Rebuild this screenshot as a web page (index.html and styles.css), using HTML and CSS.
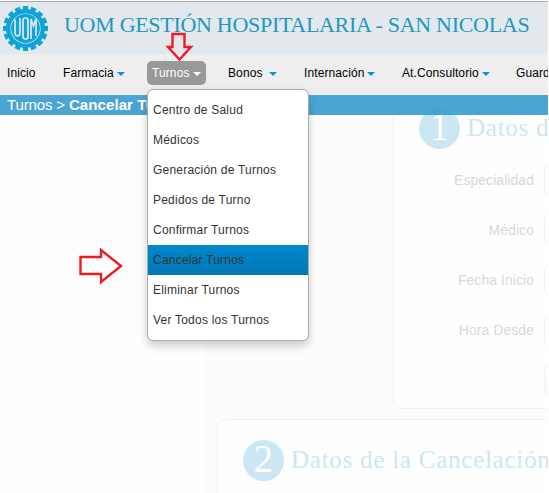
FILE: index.html
```html
<!DOCTYPE html>
<html lang="es">
<head>
<meta charset="utf-8">
<title>UOM Gestión Hospitalaria</title>
<link rel="stylesheet" href="styles.css">
</head>
<body>
<div class="app">
  <header class="header">
    <svg class="logo" width="48" height="46" viewBox="0 0 48 46">
      <circle class="teeth" cx="24.500" cy="22.500" r="20" pathLength="160"/>
      <circle class="rim" cx="24.500" cy="22.500" r="17.300"/>
      <circle class="disc" cx="24.500" cy="22.500" r="14.400"/>
      <g class="mono">
        <path d="M14 13.500V26Q14 30 16.500 30Q19 30 19 26V12"/>
        <rect x="22" y="12" width="5" height="21" rx="2.200"/>
        <path d="M30 33V13L32.500 20L35 13V30"/>
      </g>
    </svg>
    <h1 class="title">UOM GESTIÓN HOSPITALARIA - SAN NICOLAS</h1>
  </header>
  <nav class="nav">
    <a class="item">Inicio</a>
    <a class="item">Farmacia<i class="caret"></i></a>
    <div class="item">
      <a class="pill">Turnos<i class="caret"></i></a>
      <ul class="menu">
        <li>Centro de Salud</li>
        <li>Médicos</li>
        <li>Generación de Turnos</li>
        <li>Pedidos de Turno</li>
        <li>Confirmar Turnos</li>
        <li class="active">Cancelar Turnos</li>
        <li>Eliminar Turnos</li>
        <li>Ver Todos los Turnos</li>
      </ul>
    </div>
    <a class="item">Bonos<i class="caret wide"></i></a>
    <a class="item">Internación<i class="caret"></i></a>
    <a class="item">At.Consultorio<i class="caret"></i></a>
    <a class="item">Guardia</a>
  </nav>
  <div class="crumb">Turnos &gt; <b>Cancelar Turnos</b></div>
  <div class="page">
    <aside class="side"></aside>
    <main class="content">
      <section class="panel first">
        <h2 class="head"><span class="num">1</span><span>Datos del Turno</span></h2>
        <div class="row"><label>Especialidad</label><span class="field"></span></div>
        <div class="row"><label>Médico</label><span class="field"></span></div>
        <div class="row"><label>Fecha Inicio</label><span class="field"></span></div>
        <div class="row"><label>Hora Desde</label><span class="field"></span></div>
        <div class="row"><label></label><span class="field button"></span></div>
      </section>
      <section class="panel second">
        <h2 class="head"><span class="num">2</span><span>Datos de la Cancelación</span></h2>
      </section>
    </main>
  </div>
  <svg class="arrow down" width="32" height="32" viewBox="0 0 32 32"><path d="M9.500 3H21.500V16H28L16.500 28.500L5 16H9.500Z"/></svg>
  <svg class="arrow right" width="48" height="38" viewBox="0 0 48 38"><path d="M4.500 10H25V3L45 19L25 35V27H4.500Z"/></svg>
</div>
</body>
</html>
```

FILE: styles.css
```css
* { box-sizing: border-box; }
body { margin: 0; background: #fff; font-family: "Liberation Sans", Arial, sans-serif; overflow: hidden; }
.app { position: relative; width: 548px; height: 493px; overflow: hidden; }
.header { display: flex; align-items: flex-start; height: 54px; padding-left: 1px; background: #e2e8ec; border-top: 1px solid #fff; box-shadow: inset 0 1px #a9adad; }
.logo { margin-top: 5px; flex: none; }
.teeth { fill: none; stroke: #0ea5d6; stroke-width: 5; stroke-dasharray: 6.5 3.5; stroke-dashoffset: 3.25; }
.rim { fill: none; stroke: #0ea5d6; stroke-width: 4.4; }
.disc { fill: #0ea5d6; }
.mono { fill: none; stroke: #e2e8ec; stroke-width: 1.7; }
.title { margin: 10px 0 0 15px; font: 400 22px/28px "Liberation Serif", serif; letter-spacing: -.3px; color: #2098c4; white-space: nowrap; }
.nav { position: relative; z-index: 3; display: grid; grid-template-columns: 56px 84px 81px 76px 98px 114px 80px; height: 41px; padding-left: 7px; background: #eee; font-size: 12px; line-height: 24px; color: #000; white-space: nowrap; }
.item { position: relative; padding-top: 7px; letter-spacing: .1px; }
.caret { display: inline-block; margin-left: 3px; border: 4px solid transparent; border-top-color: #0a8fd4; border-bottom: 0; vertical-align: 1px; }
.caret.wide { margin-left: 6px; }
.pill { display: block; width: 59px; height: 24px; padding-left: 5px; border-radius: 5px; background: #999; color: #fff; }
.pill .caret { border-top-color: #fff; }
.menu { position: absolute; top: 35px; left: 0; width: 162px; height: 252px; margin: 0; padding: 5px 0; list-style: none; background: #fff; border: 1px solid #aaa; border-radius: 6px; box-shadow: 0 5px 10px rgba(0,0,0,.2); color: #333; letter-spacing: .22px; }
.menu li { height: 30px; padding-left: 5px; line-height: 30px; }
.menu .active { background: linear-gradient(#08c, #0077b3); }
.crumb { position: relative; z-index: 2; height: 20px; padding-left: 7px; background: rgba(50,152,206,.88); color: #fff; font-size: 15px; line-height: 20px; letter-spacing: -.15px; }
.crumb b { letter-spacing: .1px; }
.page { display: flex; height: 398px; margin-top: -20px; background: #fcfcfc; }
.side { width: 205px; flex: none; background: #fefefe; }
.content { width: 343px; padding-left: 12px; overflow: hidden; }
.panel { width: 500px; border: 1px solid #f2f2f2; border-radius: 9px; background: #fefefe; }
.first { height: 314px; margin-left: 176px; border-top: 0; border-radius: 0 0 9px 9px; padding-top: 13px; }
.second { height: 120px; margin-top: 10px; padding-top: 20px; }
.head { display: flex; gap: 7px; height: 41px; margin: 0 0 6px 25px; font: 400 25px/40px "Liberation Serif", serif; letter-spacing: .75px; color: #cbe7f3; white-space: nowrap; }
.num { width: 41px; height: 41px; flex: none; border-radius: 50%; background: #cbe7f3; color: #fff; font-size: 39px; line-height: 38px; letter-spacing: 0; text-align: center; }
.row { display: flex; align-items: center; height: 50px; font-size: 14px; color: #d8d8d8; }
.row label { width: 140px; text-align: right; letter-spacing: .05px; }
.field { width: 200px; height: 30px; margin-left: 10px; border: 1px solid #f2f2f2; border-radius: 4px; background: #fff; }
.button { background: linear-gradient(#fff, #f6f6f6); }
.arrow { position: absolute; z-index: 5; fill: none; stroke: #ed1c24; stroke-width: 2.4; }
.down { left: 163px; top: 31px; }
.right { left: 76px; top: 247px; }
```
